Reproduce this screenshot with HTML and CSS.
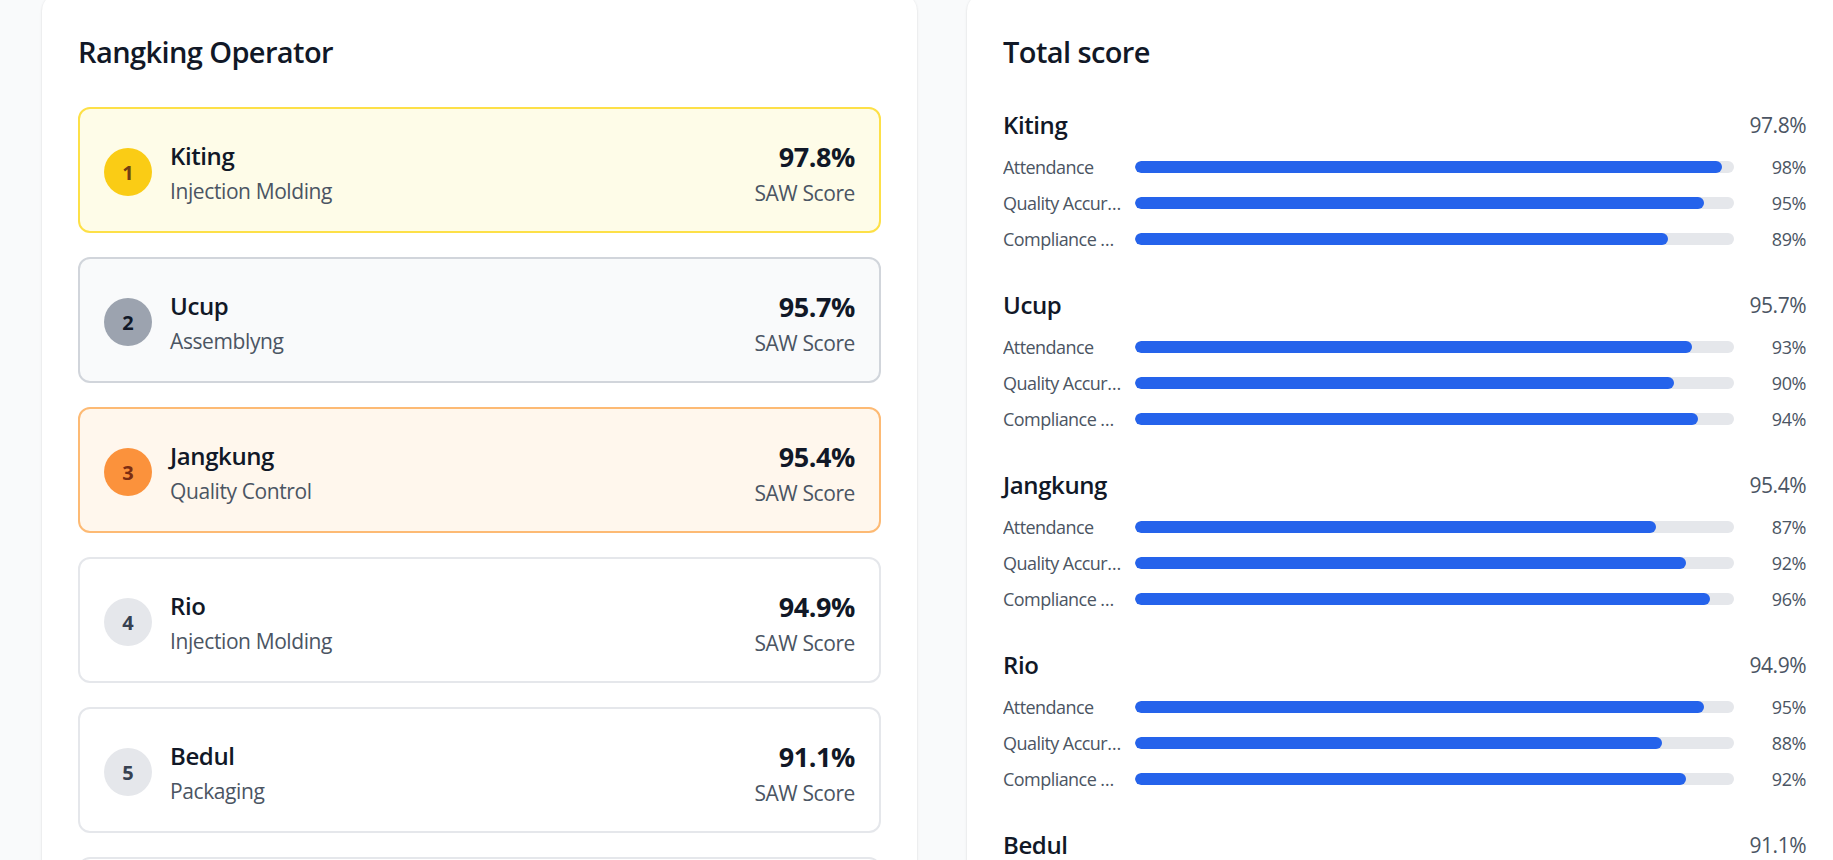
FILE: index.html
```html
<!DOCTYPE html>
<html lang="id">
<head>
<meta charset="utf-8">
<title>Rangking Operator</title>
<link rel="stylesheet" href="styles.css">
</head>
<body>
<div class="page">
  <section class="panel">
    <h2 class="panel-title">Rangking Operator</h2>
    <div class="rank-list">
      <div class="rank-card rank-gold">
        <div class="rank-left">
          <div class="rank-badge">1</div>
          <div class="rank-info"><div class="rank-name">Kiting</div><div class="rank-dept">Injection Molding</div></div>
        </div>
        <div class="rank-score"><div class="score-value">97.8%</div><div class="score-label">SAW Score</div></div>
      </div>
      <div class="rank-card rank-silver">
        <div class="rank-left">
          <div class="rank-badge">2</div>
          <div class="rank-info"><div class="rank-name">Ucup</div><div class="rank-dept">Assemblyng</div></div>
        </div>
        <div class="rank-score"><div class="score-value">95.7%</div><div class="score-label">SAW Score</div></div>
      </div>
      <div class="rank-card rank-bronze">
        <div class="rank-left">
          <div class="rank-badge">3</div>
          <div class="rank-info"><div class="rank-name">Jangkung</div><div class="rank-dept">Quality Control</div></div>
        </div>
        <div class="rank-score"><div class="score-value">95.4%</div><div class="score-label">SAW Score</div></div>
      </div>
      <div class="rank-card">
        <div class="rank-left">
          <div class="rank-badge">4</div>
          <div class="rank-info"><div class="rank-name">Rio</div><div class="rank-dept">Injection Molding</div></div>
        </div>
        <div class="rank-score"><div class="score-value">94.9%</div><div class="score-label">SAW Score</div></div>
      </div>
      <div class="rank-card">
        <div class="rank-left">
          <div class="rank-badge">5</div>
          <div class="rank-info"><div class="rank-name">Bedul</div><div class="rank-dept">Packaging</div></div>
        </div>
        <div class="rank-score"><div class="score-value">91.1%</div><div class="score-label">SAW Score</div></div>
      </div>
      <div class="rank-card">
        <div class="rank-left">
          <div class="rank-badge">6</div>
          <div class="rank-info"><div class="rank-name">Operator</div><div class="rank-dept">Packaging</div></div>
        </div>
        <div class="rank-score"><div class="score-value">89.0%</div><div class="score-label">SAW Score</div></div>
      </div>
    </div>
  </section>

  <section class="panel">
    <h2 class="panel-title">Total score</h2>
    <div class="score-list">
      <div class="op-block">
        <div class="op-head"><span class="op-name">Kiting</span><span class="op-total">97.8%</span></div>
        <div class="crit-list">
          <div class="crit-row"><span class="crit-label">Attendance</span><div class="bar"><div class="bar-fill" style="width:98%"></div></div><span class="crit-pct">98%</span></div>
          <div class="crit-row"><span class="crit-label">Quality Accuracy</span><div class="bar"><div class="bar-fill" style="width:95%"></div></div><span class="crit-pct">95%</span></div>
          <div class="crit-row"><span class="crit-label">Compliance Rate</span><div class="bar"><div class="bar-fill" style="width:89%"></div></div><span class="crit-pct">89%</span></div>
        </div>
      </div>
      <div class="op-block">
        <div class="op-head"><span class="op-name">Ucup</span><span class="op-total">95.7%</span></div>
        <div class="crit-list">
          <div class="crit-row"><span class="crit-label">Attendance</span><div class="bar"><div class="bar-fill" style="width:93%"></div></div><span class="crit-pct">93%</span></div>
          <div class="crit-row"><span class="crit-label">Quality Accuracy</span><div class="bar"><div class="bar-fill" style="width:90%"></div></div><span class="crit-pct">90%</span></div>
          <div class="crit-row"><span class="crit-label">Compliance Rate</span><div class="bar"><div class="bar-fill" style="width:94%"></div></div><span class="crit-pct">94%</span></div>
        </div>
      </div>
      <div class="op-block">
        <div class="op-head"><span class="op-name">Jangkung</span><span class="op-total">95.4%</span></div>
        <div class="crit-list">
          <div class="crit-row"><span class="crit-label">Attendance</span><div class="bar"><div class="bar-fill" style="width:87%"></div></div><span class="crit-pct">87%</span></div>
          <div class="crit-row"><span class="crit-label">Quality Accuracy</span><div class="bar"><div class="bar-fill" style="width:92%"></div></div><span class="crit-pct">92%</span></div>
          <div class="crit-row"><span class="crit-label">Compliance Rate</span><div class="bar"><div class="bar-fill" style="width:96%"></div></div><span class="crit-pct">96%</span></div>
        </div>
      </div>
      <div class="op-block">
        <div class="op-head"><span class="op-name">Rio</span><span class="op-total">94.9%</span></div>
        <div class="crit-list">
          <div class="crit-row"><span class="crit-label">Attendance</span><div class="bar"><div class="bar-fill" style="width:95%"></div></div><span class="crit-pct">95%</span></div>
          <div class="crit-row"><span class="crit-label">Quality Accuracy</span><div class="bar"><div class="bar-fill" style="width:88%"></div></div><span class="crit-pct">88%</span></div>
          <div class="crit-row"><span class="crit-label">Compliance Rate</span><div class="bar"><div class="bar-fill" style="width:92%"></div></div><span class="crit-pct">92%</span></div>
        </div>
      </div>
      <div class="op-block">
        <div class="op-head"><span class="op-name">Bedul</span><span class="op-total">91.1%</span></div>
        <div class="crit-list">
          <div class="crit-row"><span class="crit-label">Attendance</span><div class="bar"><div class="bar-fill" style="width:91%"></div></div><span class="crit-pct">91%</span></div>
          <div class="crit-row"><span class="crit-label">Quality Accuracy</span><div class="bar"><div class="bar-fill" style="width:90%"></div></div><span class="crit-pct">90%</span></div>
          <div class="crit-row"><span class="crit-label">Compliance Rate</span><div class="bar"><div class="bar-fill" style="width:92%"></div></div><span class="crit-pct">92%</span></div>
        </div>
      </div>
    </div>
  </section>
</div>
</body>
</html>
```
FILE: styles.css
```css
html, body {
  margin: 0;
  padding: 0;
  overflow: hidden;
  background: #f9fafb;
}

body {
  font-family: "Open Sans", "Noto Sans", sans-serif;
  color: #111827;
}

.page {
  display: flex;
  gap: 50px;
  padding-left: 42px;
  margin-top: -7px;
  width: 1850px;
}

.panel {
  flex: 0 0 875px;
  box-sizing: border-box;
  background: #ffffff;
  border-radius: 18px;
  padding: 36px;
  box-shadow: 0 1px 3px rgba(0, 0, 0, 0.1), 0 1px 2px rgba(0, 0, 0, 0.06);
  height: 1200px;
}

.panel-title {
  margin: 0 0 34px;
  padding-top: 2px;
  font-size: 29px;
  line-height: 42px;
  font-weight: 600;
  color: #111827;
  letter-spacing: -0.6px;
}

/* ranking cards */
.rank-list {
  display: flex;
  flex-direction: column;
  gap: 24px;
}

.rank-card {
  display: flex;
  align-items: center;
  justify-content: space-between;
  padding: 27px 24px 23px;
  border: 2px solid #e5e7eb;
  border-radius: 12px;
  background: #ffffff;
}

.rank-left {
  display: flex;
  align-items: center;
  gap: 18px;
}

.rank-badge {
  width: 48px;
  height: 48px;
  border-radius: 50%;
  display: flex;
  align-items: center;
  justify-content: center;
  background: #e5e7eb;
  color: #374151;
  font-size: 20px;
  font-weight: 700;
}

.rank-name {
  font-size: 24px;
  line-height: 36px;
  font-weight: 600;
  color: #111827;
  letter-spacing: -0.4px;
}

.rank-dept {
  margin-top: 2px;
  font-size: 21px;
  line-height: 30px;
  color: #4b5563;
  letter-spacing: -0.4px;
}

.rank-score {
  text-align: right;
}

.score-value {
  font-size: 27px;
  line-height: 42px;
  font-weight: 700;
  color: #111827;
  letter-spacing: -0.4px;
}

.score-label {
  font-size: 21px;
  line-height: 30px;
  color: #4b5563;
  letter-spacing: -0.4px;
}

.rank-gold {
  background: #fefce8;
  border-color: #fde047;
}
.rank-gold .rank-badge {
  background: #facc15;
  color: #713f12;
}

.rank-silver {
  background: #f9fafb;
  border-color: #d1d5db;
}
.rank-silver .rank-badge {
  background: #9ca3af;
  color: #111827;
}

.rank-bronze {
  background: #fff7ed;
  border-color: #fdba74;
}
.rank-bronze .rank-badge {
  background: #fb923c;
  color: #7c2d12;
}

/* score breakdown */
.score-list {
  display: flex;
  flex-direction: column;
  gap: 36px;
}

.op-head {
  display: flex;
  align-items: center;
  justify-content: space-between;
  height: 36px;
  margin-bottom: 12px;
}

.op-name {
  font-size: 24px;
  line-height: 36px;
  font-weight: 600;
  color: #111827;
  letter-spacing: -0.4px;
}

.op-total {
  font-size: 21px;
  line-height: 30px;
  color: #4b5563;
  letter-spacing: -0.5px;
}

.crit-list {
  display: flex;
  flex-direction: column;
  gap: 12px;
}

.crit-row {
  display: flex;
  align-items: center;
  gap: 12px;
  height: 24px;
}

.crit-label {
  flex: 0 0 120px;
  width: 120px;
  font-size: 18px;
  line-height: 24px;
  color: #4b5563;
  white-space: nowrap;
  overflow: hidden;
  text-overflow: ellipsis;
  letter-spacing: -0.55px;
}

.bar {
  flex: 1;
  height: 12px;
  border-radius: 999px;
  background: #e5e7eb;
  overflow: hidden;
}

.bar-fill {
  height: 100%;
  border-radius: 999px;
  background: #2563eb;
}

.crit-pct {
  flex: 0 0 60px;
  text-align: right;
  font-size: 18px;
  line-height: 24px;
  color: #4b5563;
  letter-spacing: -0.4px;
}
```
